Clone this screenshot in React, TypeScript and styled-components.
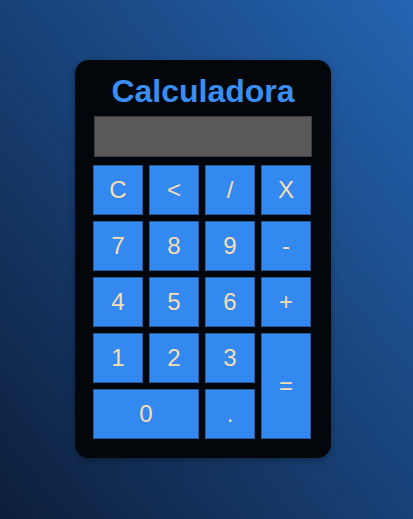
import styled, { createGlobalStyle } from 'styled-components'

const GlobalStyle = createGlobalStyle`
    html, body {
        margin: 0;
        padding: 0;
    }
    body {
        font-family: 'Liberation Sans', Arial, sans-serif;
        background: linear-gradient(to top right, #0d1e3b, #2364b2);
        min-height: 519px;
    }
`

const Page = styled.div`
    min-height: 519px;
    display: flex;
    align-items: center;
    justify-content: center;
    padding-right: 7px;
    padding-bottom: 2px;
    box-sizing: border-box;
`

const Card = styled.div`
    width: 256px;
    box-sizing: border-box;
    padding: 13px 19px 19px;
    background: #03070c;
    border-radius: 14px;
    box-shadow: 0 2px 6px rgba(0, 0, 0, 0.3);
`

const Title = styled.h1`
    margin: 0 0 6px;
    text-align: center;
    font-size: 32px;
    line-height: 37px;
    font-weight: bold;
    color: #3a8ef2;
`

const Display = styled.div`
    height: 41px;
    box-sizing: border-box;
    background: #5a5858;
    border: 1px solid #3c3c3c;
    margin-bottom: 8px;
`

const Keypad = styled.div`
    display: grid;
    grid-template-columns: repeat(4, 50px);
    grid-auto-rows: 50px;
    gap: 6px;
    margin-left: -1px;
`

const Key = styled.button<{ $wide?: boolean; $tall?: boolean }>`
    grid-column: ${(p) => (p.$wide ? 'span 2' : 'auto')};
    grid-row: ${(p) => (p.$tall ? 'span 2' : 'auto')};
    margin: 0;
    padding: 0;
    box-sizing: border-box;
    background: #3389ef;
    border: 1px solid #2a5c9c;
    color: wheat;
    font-family: 'Liberation Sans', Arial, sans-serif;
    font-size: 24px;
    cursor: pointer;
`

const keys: { label: string; wide?: boolean; tall?: boolean }[] = [
    { label: 'C' },
    { label: '<' },
    { label: '/' },
    { label: 'X' },
    { label: '7' },
    { label: '8' },
    { label: '9' },
    { label: '-' },
    { label: '4' },
    { label: '5' },
    { label: '6' },
    { label: '+' },
    { label: '1' },
    { label: '2' },
    { label: '3' },
    { label: '=', tall: true },
    { label: '0', wide: true },
    { label: '.' },
]

const App = () => {
    return (
        <>
            <GlobalStyle />
            <Page>
                <Card>
                    <Title>Calculadora</Title>
                    <Display />
                    <Keypad>
                        {keys.map((k) => (
                            <Key key={k.label} $wide={k.wide} $tall={k.tall}>
                                {k.label}
                            </Key>
                        ))}
                    </Keypad>
                </Card>
            </Page>
        </>
    )
}

export default App
